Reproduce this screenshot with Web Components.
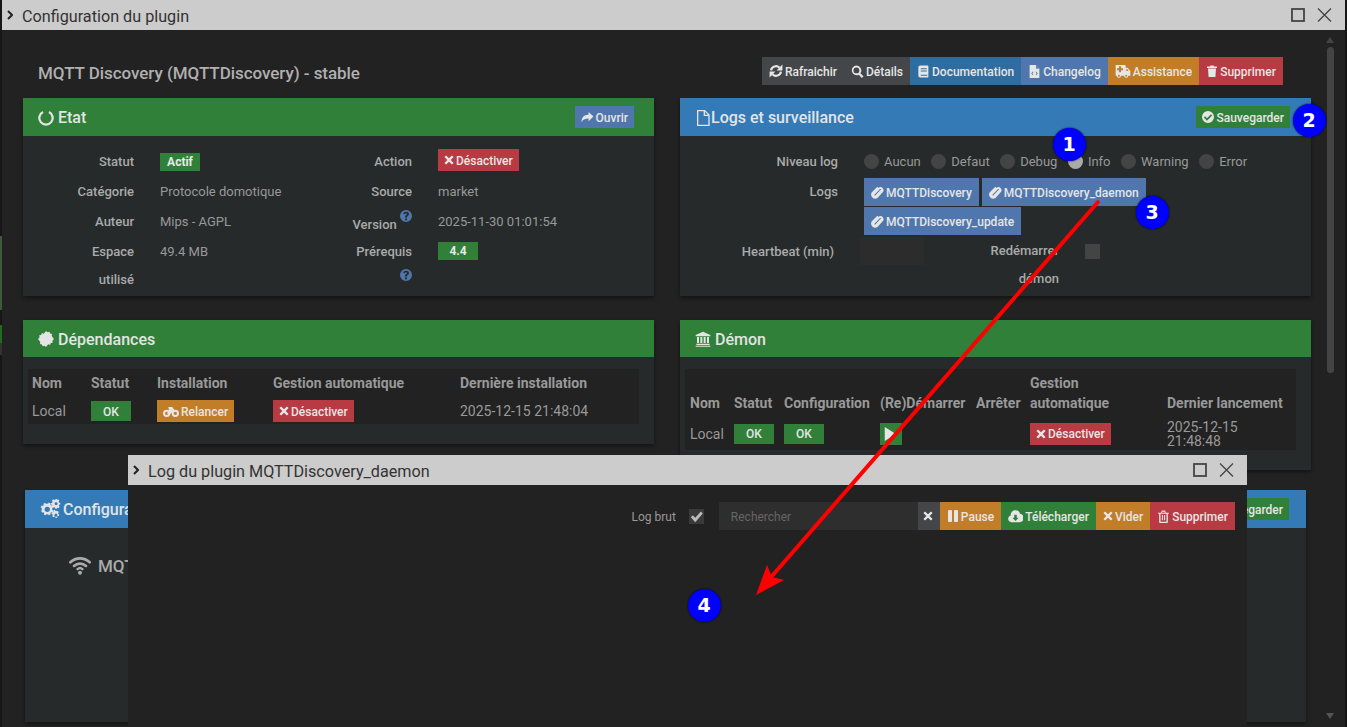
<!DOCTYPE html>
<html lang="fr">
<head>
<meta charset="utf-8">
<title>Configuration du plugin</title>
<style>
  html,body{margin:0;height:727px;overflow:hidden;background:#161616;}
  body{position:relative;font-family:Roboto,"Liberation Sans",sans-serif;font-size:13px;color:#999;
    background-image:linear-gradient(#161616 0 236px,#3d5a3d 236px 310px,#161616 310px 325px,#1f6b1f 325px 343px,#333 343px 355px,#161616 355px);
    background-size:2px 727px;background-repeat:no-repeat;}
  .cols{display:grid;grid-template-columns:631px 631px;column-gap:26px;align-items:start;}
  .log-win{position:absolute;left:128px;top:455px;width:1119px;height:272px;}
</style>
</head>
<body>
<plugin-window class="main" scroll>
  <span slot="title">Configuration du plugin</span>
  <plugin-head></plugin-head>
  <div class="cols">
    <state-panel></state-panel>
    <logs-panel></logs-panel>
    <deps-panel></deps-panel>
    <daemon-panel></daemon-panel>
  </div>
  <config-panel></config-panel>
</plugin-window>
<plugin-window class="log-win" small>
  <span slot="title">Log du plugin MQTTDiscovery_daemon</span>
  <log-toolbar></log-toolbar>
</plugin-window>
<note-layer></note-layer>

<script>
const ICONS = {
  refresh: '<g fill="none" stroke="currentColor" stroke-width="3.800"><path d="M3.500 11A8.500 8.500 0 0 1 18 6.500"/><path d="M20.500 13A8.500 8.500 0 0 1 6 17.500"/></g><path d="M23 1v10H13zM1 23V13h10z"/>',
  search: '<path fill-rule="evenodd" d="M10 1a9 9 0 0 1 7.300 14.200l5.700 5.700-2.900 2.900-5.700-5.700A9 9 0 1 1 10 1zm0 3.600a5.400 5.400 0 1 0 0 10.800 5.400 5.400 0 0 0 0-10.800z"/>',
  book: '<path fill-rule="evenodd" d="M6 1h14a1 1 0 0 1 1 1v20a1 1 0 0 1-1 1H6a3.500 3.500 0 0 1-3.500-3.500v-15A3.500 3.500 0 0 1 6 1zm1 5v2h11V6zm0 4v2h11v-2zm0 8v2h12v-2z"/>',
  filecode: '<path fill-rule="evenodd" d="M3 0h11l7 7v17H3zm6 12-3 3.500L9 19l1-1-2-2.500L10 13zm6 0-1 1 2 2.500-2 2.500 1 1 3-3.500zM15 1v6h5z"/>',
  fileo: '<path fill-rule="evenodd" d="M3 0h12l7 7v17H3zm2 2v20h15V9h-7V2zm10 .8V7h4.200z"/>',
  ambulance: '<path fill-rule="evenodd" d="M1 3h14a1 1 0 0 1 1 1v3h3l4 5v7h-3a3.200 3.200 0 0 1-6.400 0H9a3.200 3.200 0 0 1-6.400 0H1zm5 2v3H3v3h3v3h3v-3h3V8H9V5zm11 4v3h3.500L18 9zM5.800 17.500a1.500 1.500 0 1 0 0 3 1.500 1.500 0 0 0 0-3zm11 0a1.500 1.500 0 1 0 0 3 1.500 1.500 0 0 0 0-3z"/>',
  trash: '<path d="M2 3h6l1-2h6l1 2h6v3H2zM4 7h16l-1.200 17H5.200z"/>',
  trasho: '<path fill-rule="evenodd" d="M2 5h5.500L9 1h6l1.500 4H22v2h-2v15.500a1.500 1.500 0 0 1-1.500 1.500h-13A1.500 1.500 0 0 1 4 22.500V7H2zm8-2-.5 2h5L14 3zM6.500 7v14.500h11V7zM9 9h2v10H9zm4 0h2v10h-2z"/>',
  share: '<path d="M23 10 14 2v5C6 7 1 11 1 21c2-5 6-7 13-7v5z"/>',
  check: '<path fill-rule="evenodd" d="M12 0a12 12 0 1 1 0 24 12 12 0 0 1 0-24zm5.800 6.500L10 14.300l-3.800-3.800-2.500 2.500L10 19.300 20.300 9z"/>',
  clip: '<path fill="none" stroke="currentColor" stroke-width="3.400" stroke-linecap="round" d="M19 8 9 18.500a2.600 2.600 0 0 1-3.800-3.600L16 4a4 4 0 0 1 5 5.600L10.500 21a6 6 0 0 1-8-8L12 3.500"/>',
  bike: '<path fill-rule="evenodd" d="M5.500 10a5.500 5.500 0 1 1 0 11 5.500 5.500 0 0 1 0-11zm0 3a2.500 2.500 0 1 0 0 5 2.500 2.500 0 0 0 0-5zm13-3a5.500 5.500 0 1 1 0 11 5.500 5.500 0 0 1 0-11zm0 3a2.500 2.500 0 1 0 0 5 2.500 2.500 0 0 0 0-5z"/><path d="M8 6h6l4 6-1.500 1-1.500-2-3 5H6l3-6z"/>',
  times: '<path d="M5 1l7 7 7-7 4 4-7 7 7 7-4 4-7-7-7 7-4-4 7-7-7-7z"/>',
  notch: '<path fill="none" stroke="currentColor" stroke-width="3.400" d="M7.500 3a10 10 0 1 0 9 0"/>',
  cert: '<path d="M12 0l2.300 2 2.900-1 .9 2.900 3 .6-.5 3L23.900 12l-2.300 2.500.5 3-3 .6-.9 2.900-2.900-1L12 24l-2.300-2-2.900 1-.9-2.900-3-.6.5-3L.100 12l2.300-2.500-.5-3 3-.6.9-2.900 2.900 1z"/>',
  bank: '<path d="M12 1l11 5v2H1V6zM3 9h3v9H3zm5 0h3v9H8zm5 0h3v9h-3zm5 0h3v9h-3zM2 19h20v2H2zM1 22h22v1.500H1z"/>',
  cogs: '<path fill-rule="evenodd" d="M8 5l1.300.3.700-1.300 2.200 1-.4 1.500 1.100 1 1.500-.4 1 2.200-1.300.7v2.600l1.300.7-1 2.200-1.500-.4-1.100 1 .4 1.500-2.200 1-.7-1.300H7.300l-.7 1.300-2.200-1 .4-1.500-1.100-1-1.500.4-1-2.200L2 13v-2.600L.7 9.700l1-2.200 1.500.4 1.100-1-.4-1.500 2.200-1 .7 1.300zm.3 3.800a3 3 0 1 0 0 6 3 3 0 0 0 0-6z"/><path fill-rule="evenodd" d="M19 0l1 .8 1.300-.3.800 1.600-.8 1 .7 1.200 1.300.2-.2 1.800-1.300.4-.3 1.300 1 .9-1 1.500-1.300-.4-1 .8V11h-1.800l-.3-1.300-1.300-.4-1 .8-1.300-1.200.7-1.100-.5-1.200-1.300-.3.200-1.800 1.300-.2.500-1.200-.8-1.100L15 .4l1.100.7zm-.6 3.700a1.700 1.700 0 1 0 0 3.400 1.700 1.700 0 0 0 0-3.400zM18.500 13.500l1 .6 1.100-.4.900 1.400-.8.900.2 1.200 1.100.5-.4 1.600-1.200 0-.7 1-.1 1.200-1.700.2-.5-1.100-1.200-.3-1 .6-1.200-1.200.6-1-.4-1.200-1.100-.5.300-1.700 1.200-.1.700-1-.2-1.200 1.600-.6.600 1zm-.3 3.200a1.800 1.800 0 1 0 0 3.600 1.800 1.800 0 0 0 0-3.600z"/>',
  wifi: '<path fill="none" stroke="currentColor" stroke-width="3" stroke-linecap="round" d="M1.500 9a15 15 0 0 1 21 0M5.500 13a9.500 9.500 0 0 1 13 0"/><path fill="none" stroke="currentColor" stroke-width="2.600" stroke-linecap="round" d="M9.300 16.500a4 4 0 0 1 5.400 0"/><circle cx="12" cy="20.500" r="2.200"/>',
  play: '<path d="M3 0l19 12L3 24z"/>',
  pause: '<path d="M2 2a2 2 0 0 1 2-2h4a2 2 0 0 1 2 2v20a2 2 0 0 1-2 2H4a2 2 0 0 1-2-2zM14 2a2 2 0 0 1 2-2h4a2 2 0 0 1 2 2v20a2 2 0 0 1-2 2h-4a2 2 0 0 1-2-2z"/>',
  cloud: '<path fill-rule="evenodd" d="M12 2a7.500 7.500 0 0 1 7.200 5.700A6 6 0 0 1 18.500 21h-13a5.500 5.500 0 0 1-1.200-10.800A7.500 7.500 0 0 1 12 2zm-2 7v5H7l5 5 5-5h-3V9z"/>',
  help: '<path fill-rule="evenodd" d="M12 0a12 12 0 1 1 0 24 12 12 0 0 1 0-24zm-2 17v3.500h4V17zM12 3.500c-3 0-5.200 1.700-5.500 4.400l3.300.6c.2-1.200 1-2 2.200-2s2 .7 2 1.600c0 .9-.6 1.400-1.500 2.100-1.400 1-2.500 1.900-2.500 4v.6h3.900v-.4c0-.9.400-1.300 1.400-2.100 1.300-1 2.600-2.200 2.600-4.300 0-2.900-2.500-4.500-5.900-4.500z"/>',
  tick: '<path d="M3 13l3-3 4 4 9-10 3 3-12 14z"/>'
}

class XIcon extends HTMLElement {
  constructor() {
    super()
    this.attachShadow({ mode: 'open' })
    const size = this.getAttribute('size') || 13
    this.shadowRoot.innerHTML = `<style>
      :host{display:inline-flex;width:${size}px;height:${size}px;flex-shrink:0;}
      svg{width:100%;height:100%;fill:currentColor;display:block;}
    </style><svg viewBox="0 0 24 24">${ICONS[this.getAttribute('name')] || ''}</svg>`
  }
}
customElements.define('x-icon', XIcon)

class JeeBtn extends HTMLElement {
  constructor() {
    super()
    this.attachShadow({ mode: 'open' })
    const icon = this.getAttribute('icon')
    this.shadowRoot.innerHTML = `<style>
      :host{display:inline-flex;align-items:center;justify-content:center;gap:2px;height:22px;box-sizing:border-box;padding:0 6px;
        font-size:12px;font-weight:500;color:#e6e6e6;background:#444649;white-space:nowrap;vertical-align:top;}
      :host([tall]){height:28px;padding:0 7px;}
      :host([color=red]){background:#b83a42;}
      :host([color=green]){background:#318039;}
      :host([color=orange]){background:#c27d28;}
      :host([color=blue]){background:#2f6c9f;}
      :host([color=steel]){background:#4f77ad;}
      .txt{display:block;padding-top:1px;}
    </style>${icon ? `<x-icon name="${icon}" size="${this.getAttribute('isize') || 12}"></x-icon>` : ''}<span class="txt"><slot></slot></span>`
  }
}
customElements.define('jee-btn', JeeBtn)

class PluginWindow extends HTMLElement {
  constructor() {
    super()
    this.attachShadow({ mode: 'open' })
    const barX = `<svg class="ctl" width="42" height="16" viewBox="0 0 42 16" fill="none" stroke="#444" stroke-width="1.600">
      <rect x="1" y="2" width="12" height="12" stroke-width="1.800"/><path d="M27 1.500l13 13M40 1.500l-13 13" stroke-width="1.300"/></svg>`
    this.shadowRoot.innerHTML = `<style>
      :host{display:block;margin-left:2px;width:1343px;height:727px;background:#222;overflow:hidden;}
      :host([small]){margin-left:0;width:1119px;height:272px;}
      .bar{display:flex;align-items:center;height:30px;background:#ccc;color:#333;font-size:16.2px;padding:0 12px 0 5px;gap:9px;}
      .bar slot{display:block;flex:1;padding-top:2px;}
      .chev{width:6px;height:10px;flex-shrink:0;}
      .wrap{display:flex;height:697px;}
      .content{flex:1;min-width:0;padding:27px 0 0 21px;overflow:hidden;}
      :host([small]) .content{padding:0;}
      .sb{display:none;width:24px;position:relative;}
      :host([scroll]) .sb{display:block;}
      .thumb{position:absolute;left:6px;top:17px;width:7px;height:326px;background:#444;border-radius:4px;}
      .up,.dn{position:absolute;left:5px;width:0;height:0;border:4.500px solid transparent;border-top-width:0;border-bottom-width:0;}
      .up{top:7px;border-bottom:6px solid #444;}
      .dn{top:683px;border-top:6px solid #555;}
    </style>
    <div class="bar">
      <svg class="chev" viewBox="0 0 6 10"><path d="M1 1l4 4-4 4" fill="none" stroke="#222" stroke-width="2"/></svg>
      <slot name="title"></slot>${barX}
    </div>
    <div class="wrap"><div class="content"><slot></slot></div>
      <div class="sb"><div class="up"></div><div class="thumb"></div><div class="dn"></div></div>
    </div>`
  }
}
customElements.define('plugin-window', PluginWindow)

class PluginHead extends HTMLElement {
  constructor() {
    super()
    this.attachShadow({ mode: 'open' })
    this.shadowRoot.innerHTML = `<style>
      :host{display:flex;align-items:center;justify-content:space-between;width:1245px;padding-left:15px;height:28px;margin-bottom:13px;}
      .t{font-size:17px;color:#b0b0b0;margin-top:4px;font-weight:500;letter-spacing:-.05px;}
      .g{display:flex;}
    </style>
    <div class="t">MQTT Discovery (MQTTDiscovery) - stable</div>
    <div class="g">
      <jee-btn tall icon="refresh" isize="14">Rafraichir</jee-btn>
      <jee-btn tall icon="search" isize="13">Détails</jee-btn>
      <jee-btn tall color="blue" icon="book" isize="13">Documentation</jee-btn>
      <jee-btn tall color="steel" icon="filecode" isize="13">Changelog</jee-btn>
      <jee-btn tall color="orange" icon="ambulance" isize="16">Assistance</jee-btn>
      <jee-btn tall color="red" icon="trash">Supprimer</jee-btn>
    </div>`
  }
}
customElements.define('plugin-head', PluginHead)

class PluginCard extends HTMLElement {
  constructor() {
    super()
    this.attachShadow({ mode: 'open' })
    this.shadowRoot.innerHTML = `<style>
      :host{display:block;background:#262a2a;box-shadow:0 2px 4px rgba(0,0,0,.45);}
      .hd{display:flex;align-items:center;min-height:37px;padding:0 var(--pr,20px) 0 15px;background:#318039;color:#e4e4e4;font-size:16px;font-weight:500;}
      :host([color=blue]) .hd{background:#337ab7;}
      .hd .ttl{flex:1;display:flex;align-items:center;gap:var(--gap,4px);padding-top:1px;}
      ::slotted([slot=action]){margin:8px 0;}
    </style>
    <div class="hd"><div class="ttl"><x-icon name="${this.getAttribute('icon')}" size="${this.getAttribute('isize') || 16}"></x-icon><span>${this.getAttribute('heading')}</span></div><slot name="action"></slot></div>
    <slot></slot>`
  }
}
customElements.define('plugin-card', PluginCard)

class StatePanel extends HTMLElement {
  constructor() {
    super()
    this.attachShadow({ mode: 'open' })
    this.shadowRoot.innerHTML = `<style>
      :host{display:block;margin-bottom:24px;}
      .g{display:grid;grid-template-columns:111px 123px 103px 1fr;column-gap:26px;grid-auto-rows:30px;height:150px;padding-top:10px;align-items:center;}
      .l{text-align:right;color:#aaa;font-weight:500;}
      .tag{display:inline-flex;align-items:center;justify-content:center;width:40px;height:18px;background:#318039;color:#e8e8e8;font-size:12px;font-weight:700;}
      .tw{padding-top:2px;line-height:0;}
      .rb{padding-bottom:2px;line-height:0;}
      x-icon{color:#4f77ad;vertical-align:7px;}
      .tall{align-self:start;line-height:28px;padding-top:2px;}
      .tall.t4{padding-top:1px;}
      .tall x-icon{vertical-align:3px;}
    </style>
    <plugin-card icon="notch" heading="Etat">
      <jee-btn slot="action" color="steel" icon="share" isize="13">Ouvrir</jee-btn>
      <div class="g">
        <div class="l">Statut</div><div class="tw"><span class="tag">Actif</span></div>
        <div class="l">Action</div><div class="rb"><jee-btn color="red" icon="times" isize="10">Désactiver</jee-btn></div>
        <div class="l">Catégorie</div><div>Protocole domotique</div>
        <div class="l">Source</div><div>market</div>
        <div class="l">Auteur</div><div>Mips - AGPL</div>
        <div class="l">Version <x-icon name="help" size="12"></x-icon></div><div>2025-11-30 01:01:54</div>
        <div class="l tall">Espace<br>utilisé</div><div class="tall">49.4 MB</div>
        <div class="l tall">Prérequis<br><x-icon name="help" size="12"></x-icon></div><div class="tall t4"><span class="tag">4.4</span></div>
      </div>
    </plugin-card>`
  }
}
customElements.define('state-panel', StatePanel)

class LogsPanel extends HTMLElement {
  constructor() {
    super()
    this.attachShadow({ mode: 'open' })
    const radios = ['Aucun', 'Defaut', 'Debug', 'Info', 'Warning', 'Error']
    this.shadowRoot.innerHTML = `<style>
      :host{display:block;margin-bottom:24px;}
      .b{height:160px;box-sizing:border-box;padding-top:15px;}
      .r{display:flex;}
      .l{width:158px;text-align:right;color:#aaa;font-weight:500;flex-shrink:0;}
      .rad{display:flex;align-items:center;margin-left:26px;height:21px;}
      .rad div{display:flex;align-items:center;gap:5px;margin-right:10.500px;}
      .rad i{width:15px;height:15px;border-radius:50%;background:#444;display:block;}
      .rad i.on{background:#aaa;}
      .btns{margin-left:26px;margin-top:-1px;display:flex;flex-wrap:wrap;gap:1px 3px;width:290px;}
      .hb{height:28px;align-items:center;}
      .inp{width:64px;height:28px;background:#2c2c2c;margin-left:26px;}
      .re{width:113px;text-align:right;line-height:28px;margin-left:22px;}
      .box{width:15px;height:15px;background:#444;margin-left:26px;}
    </style>
    <plugin-card color="blue" icon="fileo" heading="Logs et surveillance" style="--gap:0px;--pr:21px">
      <jee-btn slot="action" color="green" icon="check">Sauvegarder</jee-btn>
      <div class="b">
        <div class="r"><div class="l" style="line-height:21px">Niveau log</div>
          <div class="rad">${radios.map(r => `<div><i class="${r === 'Info' ? 'on' : ''}"></i>${r}</div>`).join('')}</div></div>
        <div class="r" style="margin-top:7px"><div class="l" style="line-height:26px;">Logs</div>
          <div class="btns">
            <jee-btn tall color="steel" icon="clip" isize="13">MQTTDiscovery</jee-btn>
            <jee-btn tall color="steel" icon="clip" isize="13">MQTTDiscovery_daemon</jee-btn>
            <jee-btn tall color="steel" icon="clip" isize="13">MQTTDiscovery_update</jee-btn>
          </div></div>
        <div class="r hb" style="margin-top:2px"><div class="l" style="width:154px">Heartbeat (min)</div><div class="inp"></div>
          <div class="l re">Redémarrer</div><div class="box"></div></div>
        <div class="r"><div class="l" style="width:379px;line-height:28px">démon</div></div>
      </div>
    </plugin-card>`
  }
}
customElements.define('logs-panel', LogsPanel)

const TABLE_CSS = `
  table{border-collapse:collapse;table-layout:fixed;background:#222;font-size:14px;}
  th{font-weight:700;color:#999;text-align:left;padding:0 4px;vertical-align:bottom;line-height:20px;}
  td{padding:0 4px;color:#999;vertical-align:middle;line-height:14px;}
`

class DepsPanel extends HTMLElement {
  constructor() {
    super()
    this.attachShadow({ mode: 'open' })
    this.shadowRoot.innerHTML = `<style>
      :host{display:block;}
      ${TABLE_CSS}
      .b{height:87px;box-sizing:border-box;padding:12px 0 0 5px;}
      table{width:611px;}
      th{height:27px;vertical-align:middle;padding-bottom:2px;}
      td{height:26px;}
      jee-btn{width:40px;padding:0;}
      jee-btn.w{width:auto;padding:0 6px;}
    </style>
    <plugin-card icon="cert" heading="Dépendances">
      <div class="b"><table>
        <colgroup><col style="width:59px"><col style="width:66px"><col style="width:116px"><col style="width:187px"><col></colgroup>
        <tr><th>Nom</th><th>Statut</th><th>Installation</th><th>Gestion automatique</th><th>Dernière installation</th></tr>
        <tr><td>Local</td><td><jee-btn color="green" style="height:20px">OK</jee-btn></td>
          <td><jee-btn class="w" color="orange" icon="bike" isize="16">Relancer</jee-btn></td>
          <td><jee-btn class="w" color="red" icon="times" isize="10">Désactiver</jee-btn></td>
          <td>2025-12-15 21:48:04</td></tr>
      </table></div>
    </plugin-card>`
  }
}
customElements.define('deps-panel', DepsPanel)

class DaemonPanel extends HTMLElement {
  constructor() {
    super()
    this.attachShadow({ mode: 'open' })
    this.shadowRoot.innerHTML = `<style>
      :host{display:block;margin-bottom:20px;}
      ${TABLE_CSS}
      .b{height:113px;box-sizing:border-box;padding:12px 0 0 5px;}
      table{width:611px;}
      th{height:44px;padding:0 4px 4px 5px;}
      td{height:33px;line-height:14px;padding-left:5px;}
      jee-btn{width:40px;padding:0;}
      jee-btn.w{width:auto;padding:0 6px;}
      jee-btn.p{width:22px;}
    </style>
    <plugin-card icon="bank" heading="Démon">
      <div class="b"><table>
        <colgroup><col style="width:44px"><col style="width:50px"><col style="width:96px"><col style="width:96px"><col style="width:54px"><col style="width:137px"><col></colgroup>
        <tr><th>Nom</th><th>Statut</th><th>Configuration</th><th style="white-space:nowrap">(Re)Démarrer</th><th>Arrêter</th><th>Gestion automatique</th><th style="white-space:nowrap">Dernier lancement</th></tr>
        <tr><td>Local</td><td><jee-btn color="green" style="height:20px">OK</jee-btn></td>
          <td><jee-btn color="green" style="height:20px">OK</jee-btn></td>
          <td><jee-btn class="p" color="green" icon="play" isize="14"></jee-btn></td><td></td>
          <td><jee-btn class="w" color="red" icon="times" isize="10">Désactiver</jee-btn></td>
          <td>2025-12-15 21:48:48</td></tr>
      </table></div>
    </plugin-card>`
  }
}
customElements.define('daemon-panel', DaemonPanel)

class ConfigPanel extends HTMLElement {
  constructor() {
    super()
    this.attachShadow({ mode: 'open' })
    this.shadowRoot.innerHTML = `<style>
      :host{display:block;margin-left:2px;width:1281px;}
      .b{height:194px;box-sizing:border-box;padding:26px 0 0 44px;display:flex;align-items:flex-start;gap:7px;font-size:17px;color:#aaa;}
      .b span{font-weight:500;line-height:24px;}
    </style>
    <plugin-card color="blue" icon="cogs" isize="21" heading="Configuration" style="--gap:2px;--pr:17px">
      <jee-btn slot="action" color="green" icon="check">Sauvegarder</jee-btn>
      <div class="b"><x-icon name="wifi" size="22"></x-icon><span>MQTT</span></div>
    </plugin-card>`
  }
}
customElements.define('config-panel', ConfigPanel)

class LogToolbar extends HTMLElement {
  constructor() {
    super()
    this.attachShadow({ mode: 'open' })
    this.shadowRoot.innerHTML = `<style>
      :host{display:flex;align-items:center;justify-content:flex-end;padding:17px 12px 0 0;font-size:12px;color:#999;}
      .box{width:15px;height:15px;background:#3a3a3a;color:#bbb;margin:0 15px 0 13px;display:flex;}
      .inp{width:187px;height:28px;line-height:30px;padding-left:12px;background:#2e2e2e;color:#666;}
      .x{width:22px;padding:0;}
      span{padding-top:1px;}
    </style>
    <span>Log brut</span><div class="box"><x-icon name="tick" size="15"></x-icon></div>
    <div class="inp">Rechercher</div>
    <jee-btn tall class="x" icon="times" isize="10"></jee-btn>
    <jee-btn tall color="orange" icon="pause" isize="12">Pause</jee-btn>
    <jee-btn tall color="green" icon="cloud" isize="15">Télécharger</jee-btn>
    <jee-btn tall color="orange" icon="times" isize="10">Vider</jee-btn>
    <jee-btn tall color="red" icon="trasho" isize="13">Supprimer</jee-btn>`
  }
}
customElements.define('log-toolbar', LogToolbar)

// pastilles numerotees et fleche rouge par dessus la capture
class NoteLayer extends HTMLElement {
  constructor() {
    super()
    this.attachShadow({ mode: 'open' })
    const dots = [[1, 1069, 144], [2, 1309, 120], [3, 1152, 212], [4, 704, 605]]
    this.shadowRoot.innerHTML = `<style>
      :host{position:absolute;left:0;top:0;width:1347px;height:727px;pointer-events:none;}
      svg{position:absolute;left:0;top:0;}
      .d{position:absolute;width:33px;height:33px;margin:-16.500px 0 0 -16.500px;border-radius:50%;background:#00f;color:#fff;box-shadow:0 0 2px #000;
        font:bold 19px "DejaVu Sans",sans-serif;display:flex;align-items:center;justify-content:center;}
    </style>
    <svg width="1347" height="727"><path d="M1098 202 772 576" stroke="#f00" stroke-width="4" fill="none" stroke-linecap="round"/>
      <path d="M756 595 767 565 772 577 784 580z" fill="#f00"/></svg>
    ${dots.map(d => `<div class="d" style="left:${d[1]}px;top:${d[2]}px">${d[0]}</div>`).join('')}`
  }
}
customElements.define('note-layer', NoteLayer)
</script>
</body>
</html>
